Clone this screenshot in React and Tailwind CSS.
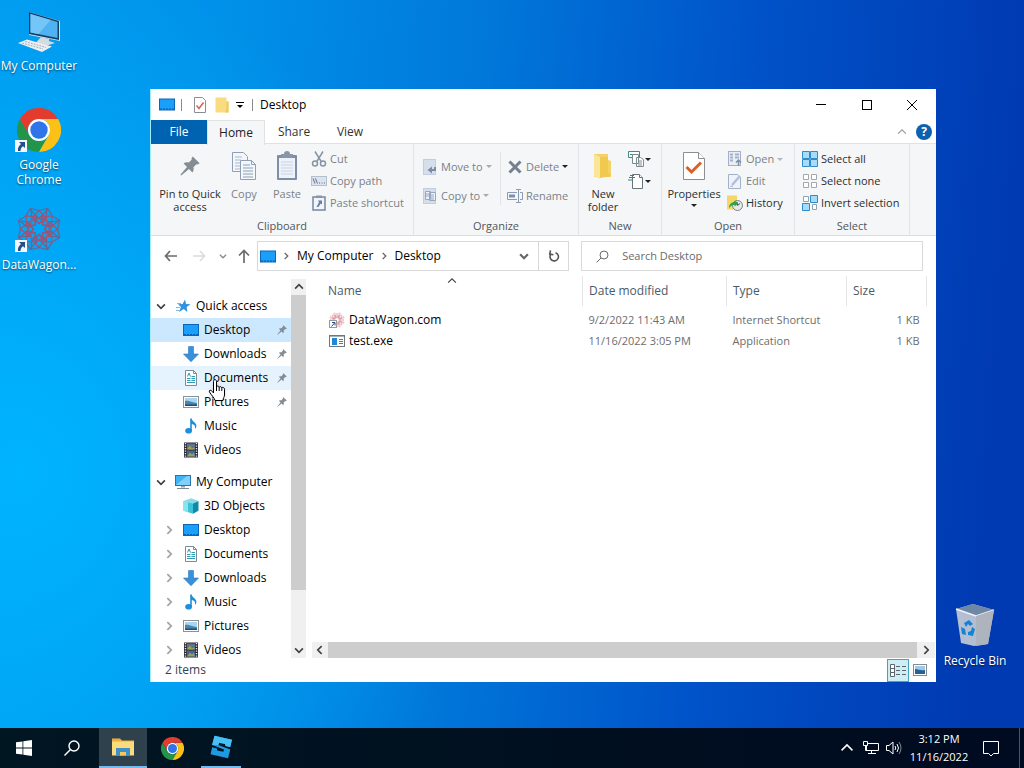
import React from 'react';

function ScreenIcon({ className = 'w-4 h-3' }) {
  return (
    <svg viewBox="0 0 16 12" className={className} aria-hidden="true">
      <rect width="16" height="12" fill="#0b66b8" />
      <rect x="1" y="1" width="14" height="10" fill="#1a9ffb" />
      <path d="M1 10.5h14" stroke="#0a5fb0" strokeDasharray="2 1" />
    </svg>
  );
}

function DownloadIcon() {
  return (
    <svg viewBox="0 0 16 16" className="w-4 h-4" aria-hidden="true">
      <path d="M5.5 0.5h5v7.5h5L8 15.8 0.5 8h5z" fill="#3a8fd9" stroke="#2b78bf" strokeWidth="0.6" />
    </svg>
  );
}

function DocumentIcon() {
  return (
    <svg viewBox="0 0 16 16" className="w-4 h-4" aria-hidden="true">
      <path d="M2.5 0.5h8l3 3v12h-11z" fill="#fff" stroke="#7f8b92" />
      <path d="M10.5 0.5v3h3" fill="none" stroke="#7f8b92" />
      <path d="M4.500 6.500L6 3l1.500 3.500M8.500 6.500H12M4 8.500h3.500M8.500 8.500H12M4 10.500h3.500M8.500 10.500H12M4 12.500h8" fill="none" stroke="#2f97b0" />
    </svg>
  );
}

function PictureIcon() {
  return (
    <svg viewBox="0 0 16 12" className="w-4 h-3" aria-hidden="true">
      <rect x="0.5" y="0.5" width="15" height="11" fill="#fff" stroke="#8c9196" />
      <rect x="2" y="2" width="12" height="8" fill="#a9d5ee" />
      <path d="M2 5c3-1 5 1 12 2v3H2z" fill="#4686b0" />
      <path d="M2 8.500h12V10H2z" fill="#1f4d75" />
    </svg>
  );
}

function MusicIcon() {
  return (
    <svg viewBox="0 0 16 16" className="w-4 h-4" aria-hidden="true">
      <ellipse cx="5.6" cy="12.8" rx="3.4" ry="2.8" fill="#1c8fdc" />
      <path d="M7.2 13V0.4h1.6c0 3 4.6 4 4.6 7.2 0 1.4-.5 2.600-1.400 3.400.7-3.400-1.200-4.600-3.200-5V13z" fill="#1c8fdc" />
    </svg>
  );
}

function VideoIcon() {
  return (
    <svg viewBox="0 0 16 16" className="w-4 h-4" aria-hidden="true">
      <rect x="1" y="0.5" width="14" height="15" fill="#2b2b36" />
      <path d="M2.500 1v14M13.500 1v14" stroke="#e4e4e4" strokeWidth="1.400" strokeDasharray="1.300 1.200" />
      <rect x="4" y="1.500" width="8" height="6" fill="#5e7488" />
      <path d="M4 7.500l3-4 2 3 1.500-1L12 7.500z" fill="#a9a24b" />
      <rect x="4" y="8.500" width="8" height="6" fill="#48648c" />
      <path d="M4 14.500l3-4 2 2 1.500-2L12 14.500z" fill="#93a06a" />
    </svg>
  );
}

function CubeIcon() {
  return (
    <svg viewBox="0 0 16 16" className="w-4 h-4" aria-hidden="true">
      <path d="M8 0.300L15.500 3 10 5.500 0.500 3z" fill="#8adbe8" />
      <path d="M0.500 3L10 5.500v10.300L0.500 12.800z" fill="#3cc3d9" />
      <path d="M15.500 3L10 5.500v10.300l5.500-3z" fill="#0f8ba8" />
      <path d="M0.500 3L5 4.200v10L0.500 12.800z" fill="#8be3ee" />
    </svg>
  );
}

function PcIcon() {
  return (
    <svg viewBox="0 0 16 16" className="w-4 h-4" aria-hidden="true">
      <rect x="0.500" y="1.500" width="15" height="10" fill="#3fb3f5" stroke="#2575ad" />
      <path d="M1 11L12 2h3v9z" fill="#7fd0fb" />
      <path d="M6 12h4v1.500H6z" fill="#9aa4ab" />
      <path d="M2 14.500h12" stroke="#7e8a92" />
    </svg>
  );
}

function StarIcon() {
  return (
    <svg viewBox="0 0 16 16" className="w-4 h-4" aria-hidden="true">
      <path d="M10 1.500l1 4.500 4.500.2-3.800 2.900.6 4.900-3.600-2.900-4.700 2.900 2-4.900L3 6.200l4.600-.2z" fill="#2f93e0" />
      <path d="M1 9.500h4M1 12.500h4M2 5.500h4" stroke="#7db9ea" />
    </svg>
  );
}

function PinIcon({ className }) {
  return (
    <svg viewBox="0 0 20 20" className={className} fill="#858d94" aria-hidden="true">
      <path d="M12.800 0.400l6.800 6.800-2 1.400-1.200-.4-3 3c.6 2 .3 3.800-1 5.200l-3.400-3.400L1.200 19.600l-.8-.8L7 11 3.600 7.600C5 6.300 6.800 6 8.800 6.600l3-3-.4-1.200z" />
    </svg>
  );
}

function Chevron({ dir, className = 'w-2 h-2', width = 1.5 }) {
  const paths = {
    up: 'M1 6l3.500-3.500L8 6',
    down: 'M1 3l3.500 3.500L8 3',
    left: 'M6 1L2.500 4.500 6 8',
    right: 'M3 1l3.500 3.500L3 8',
  };
  return (
    <svg viewBox="0 0 9 9" className={className} fill="none" stroke="currentColor" strokeWidth={width} aria-hidden="true">
      <path d={paths[dir]} />
    </svg>
  );
}

function Caret({ className = 'text-[#222]' }) {
  return (
    <svg viewBox="0 0 6 3" className={`w-[6px] h-[3px] ${className}`} aria-hidden="true">
      <path d="M0 0h6L3 3z" fill="currentColor" />
    </svg>
  );
}

function Chrome({ className }) {
  return (
    <svg viewBox="0 0 48 48" className={className} aria-hidden="true">
      <path d="M24 48A24 24 0 0 1 3.200 12L13.600 30A12 12 0 0 0 34.400 30z" fill="#23954b" />
      <path d="M44.800 12A24 24 0 0 1 24 48L34.400 30A12 12 0 0 0 24 12z" fill="#fbc116" />
      <path d="M3.200 12A24 24 0 0 1 44.800 12H24A12 12 0 0 0 13.600 30z" fill="#e33b2e" />
      <circle cx="24" cy="24" r="12" fill="#fff" />
      <circle cx="24" cy="24" r="9.500" fill="#2f74e8" />
    </svg>
  );
}

const PETALS = [0, 45, 90, 135, 180, 225, 270, 315];

function WagonLogo({ className, outer = '#6a648f', inner = '#a8506f' }) {
  return (
    <svg viewBox="0 0 46 46" className={className} fill="none" stroke={outer} strokeWidth="1.200" aria-hidden="true">
      {PETALS.map((a) => (
        <g key={a} transform={`rotate(${a} 23 23)`}>
          <path d="M15 2.500l8 2 8-2-1 10-7 5-7-5z" />
          <path d="M23 4.500l6 7-6 6-6-6zM19 9l8 6M27 9l-8 6" stroke={inner} />
        </g>
      ))}
    </svg>
  );
}

function ShortcutBadge() {
  return (
    <svg viewBox="0 0 12 12" className="absolute left-0 bottom-0 w-3 h-3" aria-hidden="true">
      <rect width="12" height="12" fill="#f4f7fb" />
      <path d="M4 2h6v6L8 6.200C6 7.500 5.500 9 5.600 11H3C2.600 8 3.800 5.800 6 4z" fill="#23508c" />
    </svg>
  );
}

function DesktopItem({ label, className, children }) {
  return (
    <button className={`absolute flex flex-col items-center w-[78px] text-white ${className}`}>
      {children}
      <span className="leading-[15px] text-center [text-shadow:0_1px_2px_rgba(0,0,0,0.6)]">{label}</span>
    </button>
  );
}

function RibbonGroup({ name, className, children }) {
  return (
    <section className={`flex flex-col shrink-0 border-r border-[#e2e4e7] ${className}`} aria-label={name}>
      <div className="flex flex-1 min-h-0 pt-1">{children}</div>
      <div className="h-[18px] leading-[17px] text-center text-[#50565c]">{name}</div>
    </section>
  );
}

function BigButton({ label, className, disabled, children }) {
  return (
    <button className={`flex flex-col items-center shrink-0 ${disabled ? 'text-[#7c8187]' : 'text-[#2b2f33]'} ${className}`}>
      <span className="flex h-9 items-center justify-center">{children}</span>
      <span className="mt-[3px] leading-[13px] text-center">{label}</span>
    </button>
  );
}

function SmallButton({ label, className = 'h-[22px]', disabled, caret, children }) {
  return (
    <button className={`flex items-center gap-[3px] whitespace-nowrap ${disabled ? 'text-[#7c8187]' : 'text-[#2b2f33]'} ${className}`}>
      <span className="flex w-4 h-4 items-center justify-center shrink-0">{children}</span>
      {label}
      {caret && <Caret className={caret} />}
    </button>
  );
}

function Ribbon() {
  return (
    <div className="flex h-[92px] shrink-0 bg-[#f5f6f7] border-b border-[#dcdddf] text-[11px]">
      <RibbonGroup name="Clipboard" className="w-[263px]">
        <BigButton label={<>Pin to Quick<br />access</>} className="ml-1 w-[70px]">
          <PinIcon className="w-5 h-5" />
        </BigButton>
        <BigButton label="Copy" className="w-[38px]" disabled>
          <svg viewBox="0 0 26 30" className="w-[26px] h-[30px]" fill="#f3f6fb" stroke="#8f9fb6" aria-hidden="true">
            <path d="M1.500 1.500h11l4 4v15h-15z" />
            <path d="M4 6h7M4 9h6M4 12h6M4 15h6M4 18h6" stroke="#a9b7cb" />
            <path d="M9.500 9.500h11l4 4v15h-15z" />
            <path d="M20.500 9.500v4h4M12 14h7M12 17h10M12 20h10M12 23h10M12 26h10" fill="none" />
          </svg>
        </BigButton>
        <BigButton label="Paste" className="ml-[3px] w-[42px]" disabled>
          <svg viewBox="0 0 22 30" className="w-[22px] h-[30px]" aria-hidden="true">
            <rect x="1" y="4" width="20" height="25" rx="1" fill="#7d8ea6" />
            <rect x="3" y="7" width="16" height="20" fill="#eef3fa" />
            <path d="M5 3h3a3 3 0 0 1 6 0h3v4H5z" fill="#8796aa" />
            <path d="M5 11h12M5 14h12M5 17h12M5 20h12M5 23h12" stroke="#c9d3e2" />
          </svg>
        </BigButton>
        <div className="ml-[3px] flex flex-col">
          <SmallButton label="Cut" disabled>
            <svg viewBox="0 0 16 16" className="w-4 h-4" fill="none" stroke="#8995a5" strokeWidth="1.500" aria-hidden="true">
              <path d="M4 0.500L10.500 11M12 0.500L5.500 11" />
              <circle cx="4" cy="12.500" r="2.500" />
              <circle cx="12" cy="12.500" r="2.500" />
            </svg>
          </SmallButton>
          <SmallButton label="Copy path" disabled>
            <svg viewBox="0 0 16 10" className="w-4 h-[10px]" fill="none" aria-hidden="true">
              <rect x="0.500" y="0.500" width="15" height="9" fill="#dce3ee" stroke="#b4bfd0" />
              <path d="M2 2.500l2 5M4.500 2.500l2 5M8 7h1M10.500 7h1M13 7h1" stroke="#5d6c86" />
            </svg>
          </SmallButton>
          <SmallButton label="Paste shortcut" disabled>
            <svg viewBox="0 0 14 16" className="w-[14px] h-4" aria-hidden="true">
              <rect x="1" y="2" width="12" height="13" fill="#f1f5fb" stroke="#7d8ea6" strokeWidth="1.600" />
              <path d="M4 0.500h6v2.500H4z" fill="#8796aa" />
              <path d="M6 5.500h4v4L8.700 8.500 6.500 12H4.500l2.500-4.700z" fill="#6b7f9c" />
            </svg>
          </SmallButton>
        </div>
      </RibbonGroup>

      <RibbonGroup name="Organize" className="w-[165px]">
        <div className="ml-2 flex flex-col w-[78px] pt-1">
          <SmallButton label="Move to" className="h-[29px]" disabled caret="text-[#a8acb1]">
            <svg viewBox="0 0 14 16" className="w-[14px] h-4" aria-hidden="true">
              <rect x="0.500" y="0.500" width="12" height="15" fill="#d6deec" stroke="#c2cde0" />
              <path d="M13 8v4H9v2.500L4.500 11 9 7.500V10h2V8z" fill="#7b8ca8" />
            </svg>
          </SmallButton>
          <SmallButton label="Copy to" className="h-[29px]" disabled caret="text-[#a8acb1]">
            <svg viewBox="0 0 14 16" className="w-[14px] h-4" fill="#eef2f9" stroke="#98a7c0" aria-hidden="true">
              <rect x="0.500" y="0.500" width="12" height="15" fill="#d6deec" stroke="#c2cde0" />
              <path d="M2.500 3.500h5v8h-5zM6.500 4.500h6v8h-6z" />
              <path d="M8 7h3M8 9h3M8 11h3M3 6h3M3 8h3" />
            </svg>
          </SmallButton>
        </div>
        <div className="mt-1 mb-3 border-l border-[#e2e4e7]" />
        <div className="ml-[6px] flex flex-col pt-1">
          <SmallButton label="Delete" className="h-[29px]" disabled caret="text-[#222]">
            <svg viewBox="0 0 14 14" className="w-[14px] h-[14px]" stroke="#75808f" strokeWidth="3" aria-hidden="true">
              <path d="M1.500 1.500l11 11M12.500 1.500l-11 11" />
            </svg>
          </SmallButton>
          <SmallButton label="Rename" className="h-[29px]" disabled>
            <svg viewBox="0 0 16 16" className="w-4 h-4" fill="none" stroke="#8a9ab2" aria-hidden="true">
              <path d="M10 4.500H0.500v7H10M13 4.500h2.500v7H13M9 1.500h5M9 14.500h5M11.500 1.500v13" />
              <path d="M2 8h6" stroke="#7f91ae" strokeWidth="3" />
            </svg>
          </SmallButton>
        </div>
      </RibbonGroup>

      <RibbonGroup name="New" className="w-[83px]">
        <BigButton label={<>New<br />folder</>} className="ml-[3px] w-[42px]">
          <svg viewBox="0 0 22 28" className="w-[22px] h-7" aria-hidden="true">
            <path d="M2 2h14v6l3 1v16H2z" fill="#f5d265" />
            <path d="M2 2l6 3v22l-6-3z" fill="#fbe59a" />
            <path d="M8 5h8v15l3 4-11 2z" fill="#f2c94f" />
          </svg>
        </BigButton>
        <div className="ml-1 flex flex-col">
          <button aria-label="New item" className="flex h-[22px] items-center gap-px">
            <svg viewBox="0 0 16 16" className="w-4 h-4" fill="#fff" stroke="#7f8b92" aria-hidden="true">
              <path d="M0.500 0.500h11v6h-11z" stroke="#3d8d80" />
              <path d="M2 3.500h6" stroke="#3d8d80" />
              <path d="M4.500 3.500h6v9h-6zM8.500 6.500h4l3 2v7h-7z" />
              <path d="M10 10h4M10 12h4M10 14h4" />
            </svg>
            <Caret />
          </button>
          <button aria-label="Easy access" className="flex h-[22px] items-center gap-px">
            <svg viewBox="0 0 16 16" className="w-4 h-4" fill="#fff" stroke="#68737a" aria-hidden="true">
              <path d="M4.500 1.500h7l3 3v11h-10z" />
              <path d="M11.500 1.500v3h3" />
              <path d="M1 4.500h6M0 7h5M2 2.500h4" stroke="#2c8b7b" />
            </svg>
            <Caret />
          </button>
        </div>
      </RibbonGroup>

      <RibbonGroup name="Open" className="w-[133px]">
        <BigButton label={<>Properties<span className="mt-1 flex justify-center"><Caret /></span></>} className="w-16">
          <svg viewBox="0 0 22 28" className="w-[22px] h-7" fill="#fff" aria-hidden="true">
            <path d="M0.500 0.500h15l6 6v21h-21z" stroke="#8b8f93" />
            <path d="M15.500 0.500v6h6" stroke="#8b8f93" />
            <path d="M3.500 15l5 5L18 10.500" fill="none" stroke="#dd5f24" strokeWidth="3" />
          </svg>
        </BigButton>
        <div className="ml-px flex flex-col">
          <SmallButton label="Open" disabled caret="text-[#b4b8bc]">
            <svg viewBox="0 0 14 16" className="w-[14px] h-4" fill="none" stroke="#a3b1c8" aria-hidden="true">
              <rect x="0.500" y="0.500" width="12" height="14" fill="#e9eef6" />
              <path d="M2 3.500h3M2 6.500h3M2 9.500h3M7 3.500h4M7 6.500h4" strokeWidth="2" />
              <path d="M10.500 15V9M8 11.500L10.500 9l2.500 2.500" stroke="#7d8ea6" strokeWidth="1.500" />
            </svg>
          </SmallButton>
          <SmallButton label="Edit" disabled>
            <svg viewBox="0 0 14 16" className="w-[14px] h-4" fill="#eef2f9" stroke="#a3b1c8" aria-hidden="true">
              <path d="M0.500 1.500h9l3 3v11h-12z" />
              <path d="M4 12l8-9" strokeWidth="2.500" stroke="#b4c0d5" />
              <path d="M2.500 13.500L5 13" />
            </svg>
          </SmallButton>
          <SmallButton label="History">
            <svg viewBox="0 0 16 16" className="w-4 h-4" aria-hidden="true">
              <path d="M0 0.500h10v14H0z" fill="#f4d669" />
              <circle cx="10.500" cy="10.500" r="5" fill="#e4e8ea" stroke="#7a8288" />
              <path d="M10.500 7.500v3l2.500-2" fill="none" stroke="#555" />
              <path d="M2 13c0-4 3-6.500 6.500-6l-1-2 4 3.500-4 3V10C5.500 9.500 4 10.500 2 13z" fill="#2fa14a" />
            </svg>
          </SmallButton>
        </div>
      </RibbonGroup>

      <RibbonGroup name="Select" className="w-[115px]">
        <div className="ml-[7px] flex flex-col">
          <SmallButton label="Select all">
            <svg viewBox="0 0 16 16" className="w-4 h-4" fill="#a9dbf9" stroke="#2d8dcb" aria-hidden="true">
              <path d="M0.500 0.500h7v7h-7zM8.500 0.500h7v7h-7zM0.500 8.500h7v7h-7zM8.500 8.500h7v7h-7z" />
            </svg>
          </SmallButton>
          <SmallButton label="Select none">
            <svg viewBox="0 0 16 16" className="w-4 h-4" fill="#fff" stroke="#a3a8ad" aria-hidden="true">
              <path d="M1.500 1.500h5v5h-5zM9.500 1.500h5v5h-5zM1.500 9.500h5v5h-5zM9.500 9.500h5v5h-5z" />
            </svg>
          </SmallButton>
          <SmallButton label="Invert selection">
            <svg viewBox="0 0 16 16" className="w-4 h-4" fill="#a9dbf9" stroke="#2d8dcb" aria-hidden="true">
              <path d="M8.500 0.500h7v7h-7zM0.500 8.500h7v7h-7z" />
              <path d="M1.500 1.500h5v5h-5zM10.500 9.500h4v5h-4z" fill="#fff" stroke="#8fa3b1" />
            </svg>
          </SmallButton>
        </div>
      </RibbonGroup>
    </div>
  );
}

const QUICK = [
  { name: 'Desktop', icon: ScreenIcon, pinned: true, row: 'bg-[#cce8ff]' },
  { name: 'Downloads', icon: DownloadIcon, pinned: true },
  { name: 'Documents', icon: DocumentIcon, pinned: true, row: 'bg-[#e5f3ff]' },
  { name: 'Pictures', icon: PictureIcon, pinned: true },
  { name: 'Music', icon: MusicIcon },
  { name: 'Videos', icon: VideoIcon },
];

const COMPUTER = [
  { name: '3D Objects', icon: CubeIcon },
  { name: 'Desktop', icon: ScreenIcon, closed: true },
  { name: 'Documents', icon: DocumentIcon, closed: true },
  { name: 'Downloads', icon: DownloadIcon, closed: true },
  { name: 'Music', icon: MusicIcon, closed: true },
  { name: 'Pictures', icon: PictureIcon, closed: true },
  { name: 'Videos', icon: VideoIcon, closed: true },
];

function TreeHead({ label, children }) {
  return (
    <button className="flex h-6 w-full items-center pl-[5px]">
      <Chevron dir="down" className="w-[10px] h-[10px] text-[#404040]" />
      <span className="ml-[9px] mr-[5px] flex w-4 shrink-0">{children}</span>
      {label}
    </button>
  );
}

function TreeItem({ item }) {
  const Icon = item.icon;
  return (
    <button className={`flex h-6 w-full items-center pl-[13px] pr-1 ${item.row || ''}`}>
      <span className="w-[19px]">
        {item.closed && <Chevron dir="right" className="w-[10px] h-[10px] text-[#a0a0a0]" />}
      </span>
      <span className="mr-[5px] flex w-4 shrink-0"><Icon /></span>
      {item.name}
      {item.pinned && <PinIcon className="ml-auto w-[10px] h-[10px]" />}
    </button>
  );
}

function NavPane() {
  return (
    <div className="flex w-[155px] shrink-0 overflow-hidden">
      <nav className="flex-1 min-w-0 pt-[18px] overflow-hidden">
        <TreeHead label="Quick access"><StarIcon /></TreeHead>
        {QUICK.map((item) => <TreeItem key={item.name} item={item} />)}
        <div className="h-2" />
        <TreeHead label="My Computer"><PcIcon /></TreeHead>
        {COMPUTER.map((item) => <TreeItem key={item.name} item={item} />)}
      </nav>
      <div className="mt-[3px] flex w-[15px] flex-col bg-[#f0f0f0] text-[#404040]">
        <button aria-label="Scroll up" className="flex h-4 items-center justify-center"><Chevron dir="up" className="w-[10px] h-[10px]" /></button>
        <div className="h-[295px] shrink-0 bg-[#cdcdcd]" />
        <div className="flex-1" />
        <button aria-label="Scroll down" className="flex h-4 items-center justify-center"><Chevron dir="down" className="w-[10px] h-[10px]" /></button>
      </div>
    </div>
  );
}

function FilePane() {
  return (
    <div className="flex flex-1 min-w-0 flex-col pl-[6px]">
      <div className="flex-1 pl-[10px] pr-[9px]">
        <table className="w-full table-fixed border-collapse text-left">
          <colgroup>
            <col />
            <col className="w-36" />
            <col className="w-[120px]" />
            <col className="w-20" />
          </colgroup>
          <thead>
            <tr className="h-[30px] text-[#4c5a67]">
              <th className="relative border-r border-[#e5e5e5] pl-[6px] font-normal">
                Name
                <Chevron dir="up" width={1} className="absolute top-0 left-1/2 -translate-x-1/2 w-[10px] h-[10px] text-[#444]" />
              </th>
              <th className="border-r border-[#e5e5e5] pl-[6px] font-normal">Date modified</th>
              <th className="border-r border-[#e5e5e5] pl-[6px] font-normal">Type</th>
              <th className="border-r border-[#e5e5e5] pl-[6px] font-normal">Size</th>
            </tr>
          </thead>
          <tbody className="text-[11px] text-[#6d6d6d]">
            <tr><td className="h-[3px]" colSpan={4} /></tr>
            <tr className="h-[21px]">
              <td className="pl-[7px] text-[12px] text-black">
                <span className="flex items-center gap-1">
                  <span className="relative w-4 h-4">
                    <WagonLogo className="w-4 h-4" outer="#e3a5ac" inner="#d87f8b" />
                    <svg viewBox="0 0 8 8" className="absolute left-0 bottom-0 w-2 h-2" aria-hidden="true">
                      <rect x="0.500" y="0.500" width="7" height="7" fill="#fff" stroke="#999" />
                      <path d="M2.500 6.500L5.500 3M3 2.500h3v3" fill="none" stroke="#23508c" />
                    </svg>
                  </span>
                  DataWagon.com
                </span>
              </td>
              <td className="pl-[6px]">9/2/2022 11:43 AM</td>
              <td className="pl-[6px]">Internet Shortcut</td>
              <td className="pr-[7px] text-right">1 KB</td>
            </tr>
            <tr className="h-[21px]">
              <td className="pl-[7px] text-[12px] text-black">
                <span className="flex items-center gap-1">
                  <svg viewBox="0 0 16 12" className="w-4 h-3" aria-hidden="true">
                    <rect x="0.500" y="0.500" width="15" height="11" fill="#fff" stroke="#70787e" />
                    <path d="M1 1.500h14" stroke="#a8b0b6" />
                    <rect x="3" y="3" width="5" height="7" fill="#2487d3" />
                    <path d="M10 4.500h4M10 6.500h4M10 8.500h4" stroke="#2487d3" />
                  </svg>
                  test.exe
                </span>
              </td>
              <td className="pl-[6px]">11/16/2022 3:05 PM</td>
              <td className="pl-[6px]">Application</td>
              <td className="pr-[7px] text-right">1 KB</td>
            </tr>
          </tbody>
        </table>
      </div>
      <div className="mr-[1px] flex h-4 shrink-0 bg-[#f0f0f0] text-[#404040]">
        <button aria-label="Scroll left" className="flex w-4 items-center justify-center"><Chevron dir="left" className="w-[10px] h-[10px]" /></button>
        <div className="flex-1 bg-[#cdcdcd]" />
        <button aria-label="Scroll right" className="flex w-[18px] items-center justify-center"><Chevron dir="right" className="w-[10px] h-[10px]" /></button>
      </div>
    </div>
  );
}

function TitleBar() {
  return (
    <header className="flex h-[31px] shrink-0 items-center pl-2 pr-px">
      <ScreenIcon className="w-4 h-[13px]" />
      <span className="ml-[6px] h-3 border-l border-[#8a8a8a]" />
      <button aria-label="Properties" className="ml-3">
        <svg viewBox="0 0 12 16" className="w-3 h-4" fill="#fff" aria-hidden="true">
          <path d="M0.500 0.500h8l3 3v12h-11z" stroke="#8b8f93" />
          <path d="M2.500 8.500l2.500 3 4.500-6" fill="none" stroke="#d06a5a" strokeWidth="1.600" />
        </svg>
      </button>
      <button aria-label="New folder" className="ml-[9px]">
        <svg viewBox="0 0 14 16" className="w-[14px] h-4" aria-hidden="true">
          <path d="M0.500 0.500h11v4h2v11h-13z" fill="#f9dc80" />
          <path d="M11.500 4.500v8l-1.500 3h3.500v-11z" fill="#edc860" />
        </svg>
      </button>
      <button aria-label="Customize" className="ml-[7px] flex flex-col items-center gap-[2px]">
        <span className="w-2 border-t border-black" />
        <Caret className="text-black" />
      </button>
      <span className="ml-2 h-3 border-l border-[#8a8a8a]" />
      <span className="ml-[7px] text-black">Desktop</span>
      <div className="ml-auto flex h-full">
        <button aria-label="Minimize" className="flex w-[46px] items-center justify-center">
          <span className="w-[10px] border-t border-black" />
        </button>
        <button aria-label="Maximize" className="flex w-[45px] items-center justify-center">
          <span className="w-[10px] h-[10px] border border-black" />
        </button>
        <button aria-label="Close" className="flex w-[46px] items-center justify-center">
          <svg viewBox="0 0 10 10" className="w-[10px] h-[10px]" stroke="#000" aria-hidden="true">
            <path d="M0 0l10 10M10 0L0 10" />
          </svg>
        </button>
      </div>
    </header>
  );
}

function TabBar() {
  return (
    <div className="flex h-6 shrink-0">
      <button className="w-14 bg-[#0063b1] text-white">File</button>
      <button className="relative z-10 -mb-px w-[58px] border border-b-0 border-[#e1e2e3] bg-[#f5f6f7] text-[#222]">Home</button>
      <button className="w-[58px] border-b border-[#e1e2e3] text-[#333]">Share</button>
      <button className="w-[54px] border-b border-[#e1e2e3] text-[#333]">View</button>
      <div className="flex flex-1 items-center justify-end gap-[9px] border-b border-[#e1e2e3] pr-1">
        <button aria-label="Collapse ribbon"><Chevron dir="up" className="w-[10px] h-[10px] text-[#999]" width={1} /></button>
        <button aria-label="Help" className="h-4 w-4 rounded-full bg-[#0a62b0] text-white font-bold leading-4 text-xs">?</button>
      </div>
    </div>
  );
}

function AddressBar() {
  return (
    <div className="flex h-10 shrink-0 items-center px-[13px] text-[#6b6b6b]">
      <button aria-label="Back">
        <svg viewBox="0 0 13 12" className="w-[13px] h-3" fill="none" stroke="currentColor" strokeWidth="1.700" aria-hidden="true">
          <path d="M6 1L1.500 6 6 11M1.500 6H13" />
        </svg>
      </button>
      <button aria-label="Forward" className="ml-4 text-[#dadada]">
        <svg viewBox="0 0 13 12" className="w-[13px] h-3" fill="none" stroke="currentColor" strokeWidth="1.500" aria-hidden="true">
          <path d="M7 1l4.500 5L7 11M0 6h11.500" />
        </svg>
      </button>
      <button aria-label="Recent" className="ml-[13px] text-[#8a8a8a]"><Chevron dir="down" /></button>
      <button aria-label="Up" className="ml-[11px]">
        <svg viewBox="0 0 12 14" className="w-3 h-[14px]" fill="none" stroke="currentColor" strokeWidth="1.700" aria-hidden="true">
          <path d="M1 6.500L6 1.500l5 5M6 1.500V14" />
        </svg>
      </button>
      <div className="ml-[7px] flex h-[30px] flex-[486] items-center border border-[#d9d9d9] pl-[2px] text-black">
        <ScreenIcon className="w-4 h-[13px]" />
        <Chevron dir="right" className="ml-[6px] w-2 h-2 text-[#666]" />
        <button className="ml-[7px]">My Computer</button>
        <Chevron dir="right" className="ml-[7px] w-2 h-2 text-[#666]" />
        <button className="ml-[6px]">Desktop</button>
        <button aria-label="History" className="ml-auto mr-[9px] text-[#666]"><Chevron dir="down" className="w-[10px] h-[10px]" width={2} /></button>
        <button aria-label="Refresh" className="flex h-full w-[30px] items-center justify-center border-l border-[#d9d9d9] text-[#555]">
          <svg viewBox="0 0 12 12" className="w-3 h-3" fill="none" stroke="currentColor" strokeWidth="1.600" aria-hidden="true">
            <path d="M7.500 2.700A4.200 4.200 0 1 1 3 4" />
            <path d="M2 0.800v3.700h3.800" transform="rotate(12 4 3)" />
          </svg>
        </button>
      </div>
      <label className="ml-3 flex h-[30px] flex-[514] items-center border border-[#d9d9d9] pl-[14px] text-[11px]">
        <svg viewBox="0 0 13 13" className="w-[13px] h-[13px] shrink-0" fill="none" stroke="#6b6b6b" aria-hidden="true">
          <circle cx="8" cy="5" r="4" />
          <path d="M5 8L0.500 12.500" />
        </svg>
        <input
          type="text"
          aria-label="Search Desktop"
          placeholder="Search Desktop"
          className="ml-[13px] w-full min-w-0 bg-transparent placeholder:text-[#6b6b6b] focus:outline-none"
        />
      </label>
    </div>
  );
}

function ExplorerWindow() {
  return (
    <main className="absolute left-[150px] right-[88px] top-[89px] bottom-[46px] flex flex-col border-l border-[#a5ecff] bg-white text-black">
      <TitleBar />
      <TabBar />
      <Ribbon />
      <AddressBar />
      <div className="flex flex-1 min-h-0">
        <NavPane />
        <FilePane />
      </div>
      <footer className="flex h-6 shrink-0 items-center justify-between pl-[14px] pr-[9px] text-[#33424f]">
        2 items
        <div className="flex h-full items-center gap-1">
          <button aria-label="Details view" className="flex h-[23px] w-[22px] items-center justify-center border border-[#45a5b8] bg-[#cdeef5]">
            <svg viewBox="0 0 16 13" className="w-4 h-[13px]" fill="none" stroke="#5c666c" aria-hidden="true">
              <path d="M0.500 0.500h4v12h-4zM0.500 4.500h4M0.500 8.500h4" fill="#fff" />
              <path d="M6 2.500h10M6 6.500h10M6 10.500h10" strokeDasharray="4 2" />
            </svg>
          </button>
          <button aria-label="Thumbnail view">
            <svg viewBox="0 0 14 12" className="w-[14px] h-3" aria-hidden="true">
              <rect x="0.500" y="0.500" width="13" height="11" fill="#fff" stroke="#858b90" />
              <rect x="2" y="2" width="10" height="8" fill="#9bcbe6" />
              <path d="M2 5c3 0 6 2 10 1v4H2z" fill="#27618f" />
            </svg>
          </button>
        </div>
      </footer>
    </main>
  );
}

function Taskbar() {
  return (
    <footer className="flex h-10 shrink-0 bg-linear-to-r from-[#001621] to-[#000a20] text-white">
      <button aria-label="Start" className="flex w-12 items-center justify-center">
        <svg viewBox="0 0 16 16" className="w-4 h-4" fill="#fff" aria-hidden="true">
          <path d="M0 2.300l6.500-.9v6.200H0zM7.300 1.300L16 0v7.600H7.300zM0 8.400h6.500v6.200L0 13.700zM7.300 8.400H16V16l-8.700-1.200z" />
        </svg>
      </button>
      <button aria-label="Search" className="flex w-12 items-center justify-center">
        <svg viewBox="0 0 16 16" className="w-4 h-4" fill="none" stroke="#fff" strokeWidth="1.400" aria-hidden="true">
          <circle cx="10" cy="6" r="5" />
          <path d="M6.500 9.500L0.500 15.500" />
        </svg>
      </button>
      <button aria-label="File Explorer" className="ml-[3px] flex w-12 items-center justify-center border-b-2 border-[#76b9ed] bg-[#2f414c]">
        <svg viewBox="0 0 22 18" className="w-[22px] h-[18px]" aria-hidden="true">
          <path d="M0 0.500h8l2 2h12v3H0z" fill="#e9b13b" />
          <path d="M0 3.500h22v14H0z" fill="#fbdb7c" />
          <path d="M4 10h14v8h-4v-4H8v4H4z" fill="#3f8fcb" />
          <path d="M8 14h6v3.500H8z" fill="#f7c95a" />
        </svg>
      </button>
      <button aria-label="Chrome" className="ml-px flex w-12 items-center justify-center">
        <Chrome className="w-[23px] h-[23px]" />
      </button>
      <button aria-label="Studio" className="ml-[5px] flex w-10 items-center justify-center border-b-2 border-[#76b9ed]">
        <svg viewBox="0 0 24 24" className="w-6 h-6" aria-hidden="true">
          <path d="M5.500 0.800l17.500 4-1.800 7.200-4.700-1.100-.3-1.800-6-1.400-.9 2.200 12 4.600-2.300 8.700L1.500 19.200 3.200 12.300l4.700 1.100.4 2 6 1.400.8-2.300L3.100 10z" fill="#1e9be0" />
          <path d="M5.500 0.800l17.500 4-1.800 7.200-4.700-1.100-.3-1.800-6-1.400-.9 2.200L3.100 10z" fill="#45c1f5" />
        </svg>
      </button>
      <div className="ml-auto flex items-center">
        <button aria-label="Hidden icons"><Chevron dir="up" className="w-[14px] h-[14px]" width={1} /></button>
        <svg viewBox="0 0 16 14" className="ml-[9px] w-4 h-[14px]" fill="none" stroke="#fff" role="img" aria-label="Network">
          <path d="M5 2.500h10.500v7h-12V5M8.500 9.500v3M5 12.500h8" />
          <path d="M0.500 0.500h4v4h-4z" />
          <path d="M2.500 4.500v5h2" />
        </svg>
        <svg viewBox="0 0 16 14" className="ml-[7px] w-4 h-[14px]" fill="none" stroke="#fff" role="img" aria-label="Volume">
          <path d="M0.500 4.500h2.500l4-3.500v12L3 9.500H0.500z" />
          <path d="M9 5q1.500 2 0 4M11 3q3 4 0 8" />
          <path d="M13 1q4 6 0 12" stroke="#7d8791" />
        </svg>
        <div className="ml-[2px] w-[70px] text-center text-[11px] leading-[18px]">
          3:12 PM<br />11/16/2022
        </div>
        <button aria-label="Notifications" className="ml-2">
          <svg viewBox="0 0 18 17" className="w-[18px] h-[17px]" fill="none" stroke="#fff" aria-hidden="true">
            <path d="M1.500 1.500h15v12h-5l-2.500 2.500-2.500-2.500h-5z" />
          </svg>
        </button>
        <span className="ml-[19px] mr-1 h-10 border-l border-[#4a5566]" />
      </div>
    </footer>
  );
}

export default function App() {
  return (
    <div className="flex h-screen flex-col overflow-hidden font-['Open_Sans',sans-serif] text-[12px] leading-4">
      <div className="relative flex-1 overflow-hidden bg-[radial-gradient(ellipse_45%_70%_at_2%_65%,#00b4ff_0%,#00b4ff00_100%),linear-gradient(95deg,#009cf0_0%,#0092ea_20%,#0078da_45%,#0052c8_70%,#003ab2_95%)]">
        <DesktopItem label="My Computer" className="left-0 top-[10px]">
          <svg viewBox="0 0 44 44" className="mb-1 w-11 h-11" aria-hidden="true">
            <path d="M12 2l31 9v20l-31-6z" fill="#cfdfe9" />
            <path d="M12 2l30 9v19l-30-6z" fill="#173f66" />
            <path d="M13.500 4l27 8v16l-27-5.500z" fill="#4fb2f2" />
            <path d="M13.500 4l20 6-12 14-8-1.500z" fill="#74c6f8" />
            <path d="M24 27l8 2v2l6 2-8 2.500-11-3z" fill="#d3dce2" />
            <path d="M1 33l9-3.500 25 7-10 5.500z" fill="#eceff1" />
            <path d="M5 33l21 6M8 31.500l21 6" stroke="#a4afb7" strokeDasharray="2 1" />
          </svg>
        </DesktopItem>
        <DesktopItem label={<>Google<br />Chrome</>} className="left-0 top-[108px]">
          <span className="relative mb-[5px] w-12 h-11">
            <Chrome className="mx-auto w-11 h-11" />
            <ShortcutBadge />
          </span>
        </DesktopItem>
        <DesktopItem label="DataWagon..." className="left-0 top-[206px]">
          <span className="relative mb-[5px] w-12 h-[46px]">
            <WagonLogo className="mx-auto w-[46px] h-[46px]" />
            <ShortcutBadge />
          </span>
        </DesktopItem>
        <DesktopItem label="Recycle Bin" className="right-[10px] bottom-[60px]">
          <svg viewBox="0 0 40 44" className="mb-[6px] w-10 h-11" aria-hidden="true">
            <path d="M1 6L18 1l21 6-6 34-14 2-13-3z" fill="#c6cdd6" fillOpacity="0.900" />
            <path d="M1 6L18 1l21 6-18 6z" fill="#6f87a6" />
            <path d="M1 6l20 7 18-6" fill="none" stroke="#eef2f5" strokeWidth="1.500" />
            <path d="M21 13l18-6-6 34-12 2z" fill="#aeb4bd" />
            <path d="M9 20l5-3 4 4-3 2-2-2-2 3zM6 24l4 2 1 6-4-1zM13 32l5 1 2-7-3-2-1 4-3 1z" fill="#1583d3" />
          </svg>
        </DesktopItem>

        <ExplorerWindow />

        <svg viewBox="0 0 18 24" className="absolute left-[208px] top-[379px] w-[18px] h-6 drop-shadow" fill="#fff" stroke="#000" aria-hidden="true">
          <path d="M5.500 14V2.500C5.500 0 8.500 0 8.500 2.500V8c0-1.500 2.700-1.300 2.700.6 0-1.500 2.600-1.200 2.600.6 0-1.300 2.700-1 2.700 1V16c0 2-1.500 3-1.500 5.500H7C6.500 19 4 17 1.500 13c-1-2 1.500-3 4 1z" />
          <path d="M8.500 8v4M11.200 8.600V12M13.800 9.200V12" fill="none" />
        </svg>
      </div>
      <Taskbar />
    </div>
  );
}
